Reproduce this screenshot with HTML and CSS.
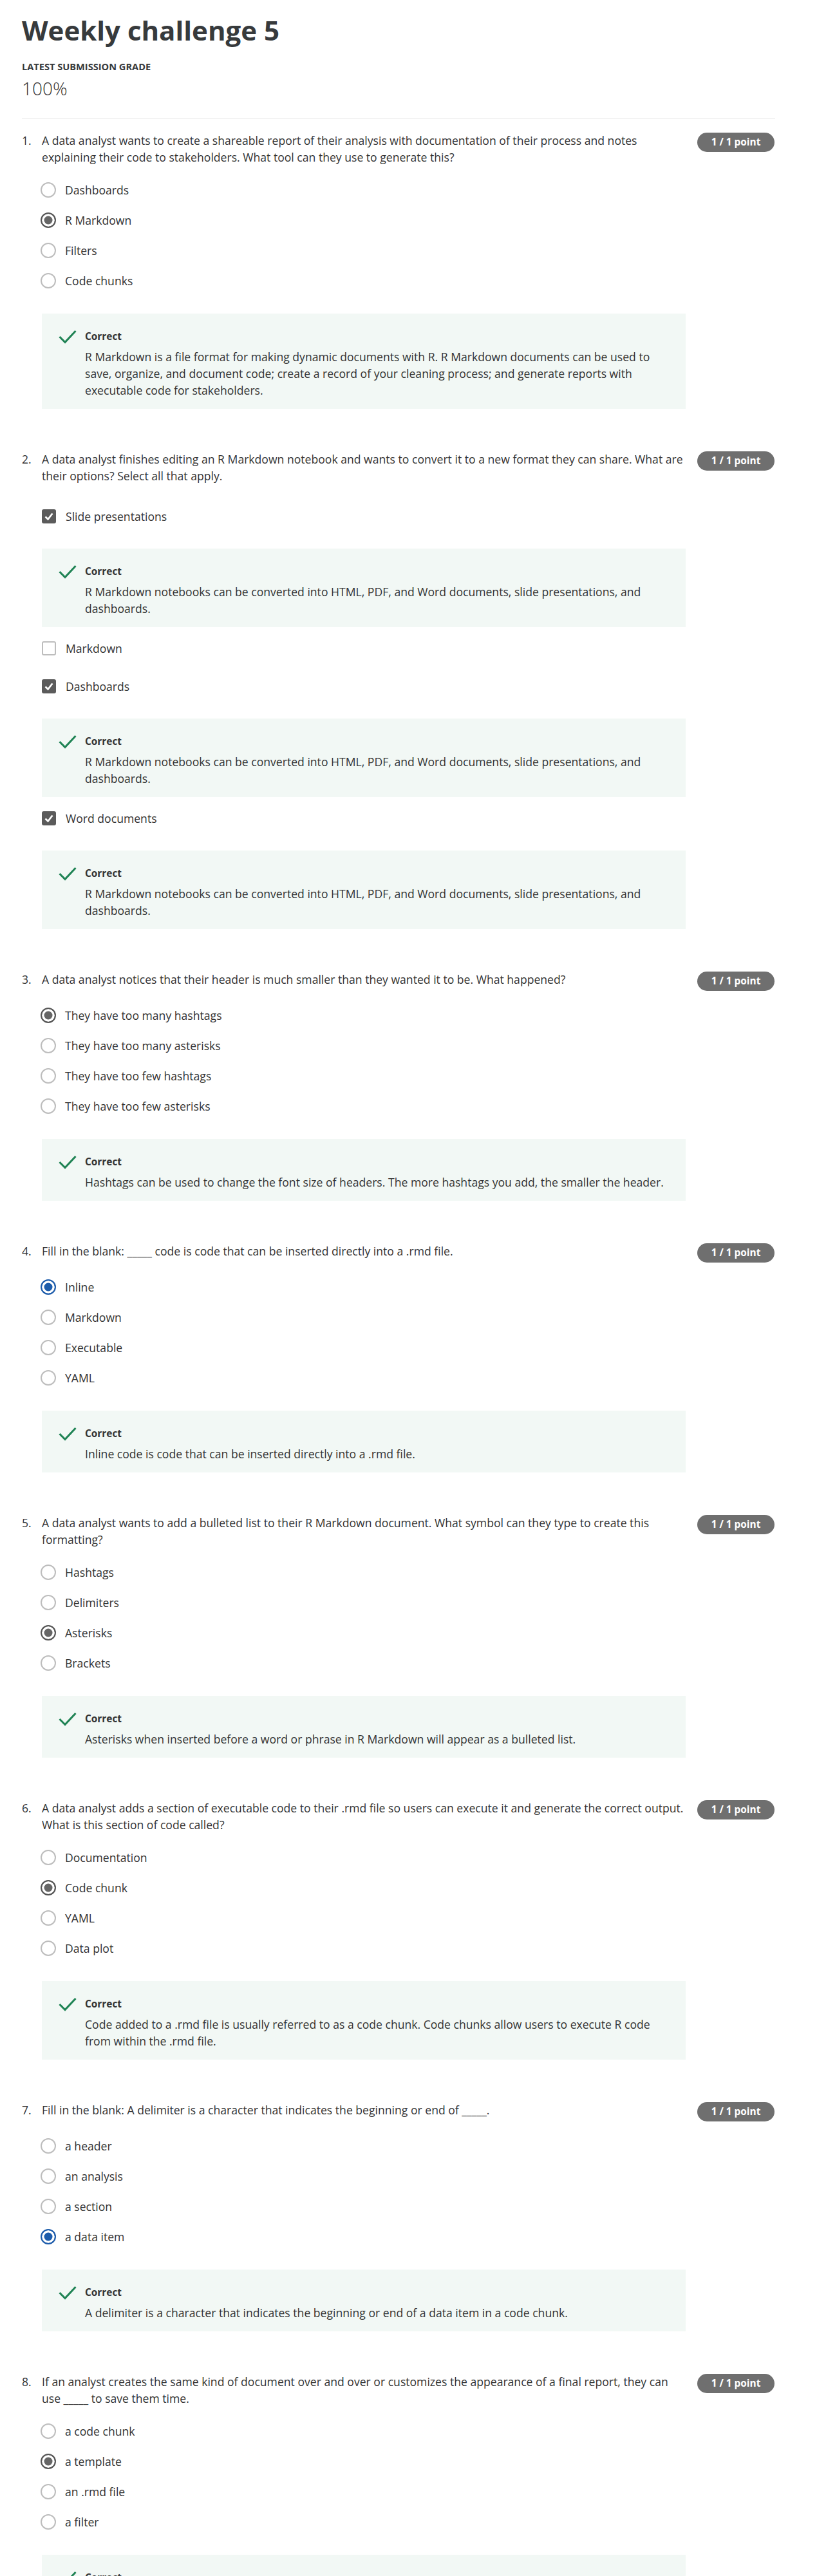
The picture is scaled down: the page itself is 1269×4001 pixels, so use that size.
FILE: index.html
```html
<!DOCTYPE html>
<html lang="en">
<head>
<meta charset="utf-8">
<title>Weekly challenge 5</title>
<link rel="stylesheet" href="styles.css">
</head>
<body>
<main class="page">
  <header class="head">
    <h1 class="title">Weekly challenge 5</h1>
    <div class="grade-label">LATEST SUBMISSION GRADE</div>
    <div class="grade-value">100%</div>
  </header>
  <hr class="sep">

  <!-- Q1 -->
  <section class="question">
    <div class="q-head">
      <span class="q-num">1.</span>
      <div class="q-text">A data analyst wants to create a shareable report of their analysis with documentation of their process and notes explaining their code to stakeholders. What tool can they use to generate this?</div>
      <span class="badge">1 / 1 point</span>
    </div>
    <div class="q-body">
      <div class="options">
        <div class="opt"><span class="radio"></span><span class="label">Dashboards</span></div>
        <div class="opt"><span class="radio sel"></span><span class="label">R Markdown</span></div>
        <div class="opt"><span class="radio"></span><span class="label">Filters</span></div>
        <div class="opt"><span class="radio"></span><span class="label">Code chunks</span></div>
      </div>
      <div class="feedback">
        <div class="fb-head"><svg class="check" viewBox="0 0 28 22" width="28" height="22"><polyline points="1.5,11 10,19.5 26.5,2" fill="none" stroke="#1f8354" stroke-width="3"/></svg><span class="fb-title">Correct</span></div>
        <p class="fb-text">R Markdown is a file format for making dynamic documents with R. R Markdown documents can be used to save, organize, and document code; create a record of your cleaning process; and generate reports with executable code for stakeholders.</p>
      </div>
    </div>
  </section>

  <!-- Q2 -->
  <section class="question">
    <div class="q-head">
      <span class="q-num">2.</span>
      <div class="q-text">A data analyst finishes editing an R Markdown notebook and wants to convert it to a new format they can share. What are their options? Select all that apply.</div>
      <span class="badge">1 / 1 point</span>
    </div>
    <div class="q-body multi">
      <div class="opt cb-opt"><span class="checkbox on"><svg viewBox="0 0 22 22" width="22" height="22"><polyline points="5.5,11.5 9.5,15.5 16.5,6.5" fill="none" stroke="#fff" stroke-width="2.6"/></svg></span><span class="label">Slide presentations</span></div>
      <div class="feedback cb-fb">
        <div class="fb-head"><svg class="check" viewBox="0 0 28 22" width="28" height="22"><polyline points="1.5,11 10,19.5 26.5,2" fill="none" stroke="#1f8354" stroke-width="3"/></svg><span class="fb-title">Correct</span></div>
        <p class="fb-text">R Markdown notebooks can be converted into HTML, PDF, and Word documents, slide presentations, and dashboards.</p>
      </div>
      <div class="opt cb-opt"><span class="checkbox"></span><span class="label">Markdown</span></div>
      <div class="opt cb-opt"><span class="checkbox on"><svg viewBox="0 0 22 22" width="22" height="22"><polyline points="5.5,11.5 9.5,15.5 16.5,6.5" fill="none" stroke="#fff" stroke-width="2.6"/></svg></span><span class="label">Dashboards</span></div>
      <div class="feedback cb-fb">
        <div class="fb-head"><svg class="check" viewBox="0 0 28 22" width="28" height="22"><polyline points="1.5,11 10,19.5 26.5,2" fill="none" stroke="#1f8354" stroke-width="3"/></svg><span class="fb-title">Correct</span></div>
        <p class="fb-text">R Markdown notebooks can be converted into HTML, PDF, and Word documents, slide presentations, and dashboards.</p>
      </div>
      <div class="opt cb-opt"><span class="checkbox on"><svg viewBox="0 0 22 22" width="22" height="22"><polyline points="5.5,11.5 9.5,15.5 16.5,6.5" fill="none" stroke="#fff" stroke-width="2.6"/></svg></span><span class="label">Word documents</span></div>
      <div class="feedback cb-fb">
        <div class="fb-head"><svg class="check" viewBox="0 0 28 22" width="28" height="22"><polyline points="1.5,11 10,19.5 26.5,2" fill="none" stroke="#1f8354" stroke-width="3"/></svg><span class="fb-title">Correct</span></div>
        <p class="fb-text">R Markdown notebooks can be converted into HTML, PDF, and Word documents, slide presentations, and dashboards.</p>
      </div>
    </div>
  </section>

  <!-- Q3 -->
  <section class="question">
    <div class="q-head">
      <span class="q-num">3.</span>
      <div class="q-text">A data analyst notices that their header is much smaller than they wanted it to be. What happened?</div>
      <span class="badge">1 / 1 point</span>
    </div>
    <div class="q-body">
      <div class="options">
        <div class="opt"><span class="radio sel"></span><span class="label">They have too many hashtags</span></div>
        <div class="opt"><span class="radio"></span><span class="label">They have too many asterisks</span></div>
        <div class="opt"><span class="radio"></span><span class="label">They have too few hashtags</span></div>
        <div class="opt"><span class="radio"></span><span class="label">They have too few asterisks</span></div>
      </div>
      <div class="feedback">
        <div class="fb-head"><svg class="check" viewBox="0 0 28 22" width="28" height="22"><polyline points="1.5,11 10,19.5 26.5,2" fill="none" stroke="#1f8354" stroke-width="3"/></svg><span class="fb-title">Correct</span></div>
        <p class="fb-text">Hashtags can be used to change the font size of headers. The more hashtags you add, the smaller the header.</p>
      </div>
    </div>
  </section>

  <!-- Q4 -->
  <section class="question">
    <div class="q-head">
      <span class="q-num">4.</span>
      <div class="q-text">Fill in the blank: _____ code is code that can be inserted directly into a .rmd file.</div>
      <span class="badge">1 / 1 point</span>
    </div>
    <div class="q-body">
      <div class="options">
        <div class="opt"><span class="radio sel blue"></span><span class="label">Inline</span></div>
        <div class="opt"><span class="radio"></span><span class="label">Markdown</span></div>
        <div class="opt"><span class="radio"></span><span class="label">Executable</span></div>
        <div class="opt"><span class="radio"></span><span class="label">YAML</span></div>
      </div>
      <div class="feedback">
        <div class="fb-head"><svg class="check" viewBox="0 0 28 22" width="28" height="22"><polyline points="1.5,11 10,19.5 26.5,2" fill="none" stroke="#1f8354" stroke-width="3"/></svg><span class="fb-title">Correct</span></div>
        <p class="fb-text">Inline code is code that can be inserted directly into a .rmd file.</p>
      </div>
    </div>
  </section>

  <!-- Q5 -->
  <section class="question">
    <div class="q-head">
      <span class="q-num">5.</span>
      <div class="q-text">A data analyst wants to add a bulleted list to their R Markdown document. What symbol can they type to create this formatting?</div>
      <span class="badge">1 / 1 point</span>
    </div>
    <div class="q-body">
      <div class="options">
        <div class="opt"><span class="radio"></span><span class="label">Hashtags</span></div>
        <div class="opt"><span class="radio"></span><span class="label">Delimiters</span></div>
        <div class="opt"><span class="radio sel"></span><span class="label">Asterisks</span></div>
        <div class="opt"><span class="radio"></span><span class="label">Brackets</span></div>
      </div>
      <div class="feedback">
        <div class="fb-head"><svg class="check" viewBox="0 0 28 22" width="28" height="22"><polyline points="1.5,11 10,19.5 26.5,2" fill="none" stroke="#1f8354" stroke-width="3"/></svg><span class="fb-title">Correct</span></div>
        <p class="fb-text">Asterisks when inserted before a word or phrase in R Markdown will appear as a bulleted list.</p>
      </div>
    </div>
  </section>

  <!-- Q6 -->
  <section class="question">
    <div class="q-head">
      <span class="q-num">6.</span>
      <div class="q-text">A data analyst adds a section of executable code to their .rmd file so users can execute it and generate the correct output. What is this section of code called?</div>
      <span class="badge">1 / 1 point</span>
    </div>
    <div class="q-body">
      <div class="options">
        <div class="opt"><span class="radio"></span><span class="label">Documentation</span></div>
        <div class="opt"><span class="radio sel"></span><span class="label">Code chunk</span></div>
        <div class="opt"><span class="radio"></span><span class="label">YAML</span></div>
        <div class="opt"><span class="radio"></span><span class="label">Data plot</span></div>
      </div>
      <div class="feedback">
        <div class="fb-head"><svg class="check" viewBox="0 0 28 22" width="28" height="22"><polyline points="1.5,11 10,19.5 26.5,2" fill="none" stroke="#1f8354" stroke-width="3"/></svg><span class="fb-title">Correct</span></div>
        <p class="fb-text">Code added to a .rmd file is usually referred to as a code chunk. Code chunks allow users to execute R code from within the .rmd file.</p>
      </div>
    </div>
  </section>

  <!-- Q7 -->
  <section class="question">
    <div class="q-head">
      <span class="q-num">7.</span>
      <div class="q-text">Fill in the blank: A delimiter is a character that indicates the beginning or end of _____.</div>
      <span class="badge">1 / 1 point</span>
    </div>
    <div class="q-body">
      <div class="options">
        <div class="opt"><span class="radio"></span><span class="label">a header</span></div>
        <div class="opt"><span class="radio"></span><span class="label">an analysis</span></div>
        <div class="opt"><span class="radio"></span><span class="label">a section</span></div>
        <div class="opt"><span class="radio sel blue"></span><span class="label">a data item</span></div>
      </div>
      <div class="feedback">
        <div class="fb-head"><svg class="check" viewBox="0 0 28 22" width="28" height="22"><polyline points="1.5,11 10,19.5 26.5,2" fill="none" stroke="#1f8354" stroke-width="3"/></svg><span class="fb-title">Correct</span></div>
        <p class="fb-text">A delimiter is a character that indicates the beginning or end of a data item in a code chunk.</p>
      </div>
    </div>
  </section>

  <!-- Q8 -->
  <section class="question">
    <div class="q-head">
      <span class="q-num">8.</span>
      <div class="q-text">If an analyst creates the same kind of document over and over or customizes the appearance of a final report, they can use _____ to save them time.</div>
      <span class="badge">1 / 1 point</span>
    </div>
    <div class="q-body">
      <div class="options">
        <div class="opt"><span class="radio"></span><span class="label">a code chunk</span></div>
        <div class="opt"><span class="radio sel"></span><span class="label">a template</span></div>
        <div class="opt"><span class="radio"></span><span class="label">an .rmd file</span></div>
        <div class="opt"><span class="radio"></span><span class="label">a filter</span></div>
      </div>
      <div class="feedback">
        <div class="fb-head"><svg class="check" viewBox="0 0 28 22" width="28" height="22"><polyline points="1.5,11 10,19.5 26.5,2" fill="none" stroke="#1f8354" stroke-width="3"/></svg><span class="fb-title">Correct</span></div>
        <p class="fb-text">A template is a document with pre-set formatting that can be reused to save time when creating the same kind of document or customizing the appearance of a final report.</p>
      </div>
    </div>
  </section>
</main>
</body>
</html>
```

FILE: styles.css
```css
* { box-sizing: border-box; }

html, body {
  margin: 0;
  padding: 0;
  background: #ffffff;
}

body {
  font-family: "Open Sans", "Noto Sans", "Liberation Sans", sans-serif;
  color: #333333;
  font-size: 17.6px;
  line-height: 26.4px;
}

.page {
  width: 1204px;
  padding: 22px 0 80px 34px;
}

.title {
  margin: 0;
  font-size: 42px;
  line-height: 50px;
  font-weight: 700;
  color: #373a3c;
}

.grade-label {
  margin-top: 21px;
  font-size: 14.6px;
  line-height: 20px;
  font-weight: 700;
  color: #373a3c;
}

.grade-value {
  margin-top: 6px;
  font-size: 28px;
  line-height: 36px;
  font-weight: 300;
  color: #333;
}

.sep {
  margin: 28px 0 0 0;
  border: 0;
  border-top: 1px solid #e4e4e4;
  height: 0;
}

.question {
  margin-top: 65px;
}
.sep + .question {
  margin-top: 21px;
}

.q-head {
  display: grid;
  grid-template-columns: 31px 1003px 120px;
  align-items: start;
}

.q-num {
  font-size: 17.6px;
  line-height: 26px;
}

.q-text {
  font-size: 17.6px;
  line-height: 26px;
  width: 1003px;
}

.badge {
  width: 120px;
  height: 30px;
  margin-top: 1px;
  margin-left: 15px;
  border-radius: 15px;
  background: #6f6f6f;
  color: #fff;
  font-size: 15.4px;
  font-weight: 700;
  line-height: 30px;
  text-align: center;
}

.q-body {
  margin-left: 31px;
  width: 1000px;
}

.options {
  margin-top: 14px;
}

.opt {
  display: flex;
  align-items: center;
  height: 47.25px;
}

.label {
  font-size: 17.6px;
  line-height: 26px;
  color: #333;
}

.radio {
  flex: none;
  width: 24px;
  height: 24px;
  margin-left: -2px;
  margin-right: 14px;
  border-radius: 50%;
  border: 2px solid #bdbdbd;
  background: #fff;
}
.radio.sel {
  border: 2.5px solid #555;
  background: #666;
  box-shadow: inset 0 0 0 3.5px #fff;
}
.radio.sel.blue {
  border-color: #1d5cab;
  background: #1d5cab;
}

.checkbox {
  flex: none;
  width: 22px;
  height: 22px;
  margin-right: 15px;
  border-radius: 3px;
  border: 2px solid #bdbdbd;
  background: #fff;
  display: flex;
  align-items: center;
  justify-content: center;
}
.checkbox.on {
  border: 0;
  background: #5b5b5b;
}
.checkbox svg { display: block; }

.multi {
  padding-top: 20.5px;
}
.cb-opt {
  height: 59px;
}

.feedback {
  margin-top: 27px;
  background: #f2f8f5;
  padding: 24px 20px 16px 27px;
}
.feedback.cb-fb {
  margin-top: 20.5px;
  margin-bottom: 3.5px;
}
.feedback.cb-fb:last-child {
  margin-bottom: 0;
}

.fb-head {
  display: flex;
  align-items: center;
  height: 24px;
}

.check {
  flex: none;
  display: block;
  width: 28px;
  height: 22px;
  margin-left: -1px;
  margin-right: 13px;
}

.fb-title {
  font-size: 15.4px;
  font-weight: 700;
  line-height: 24px;
  color: #333;
}

.fb-text {
  margin: 6px 0 0 40px;
  font-size: 17.6px;
  line-height: 26px;
  color: #333;
}
```
